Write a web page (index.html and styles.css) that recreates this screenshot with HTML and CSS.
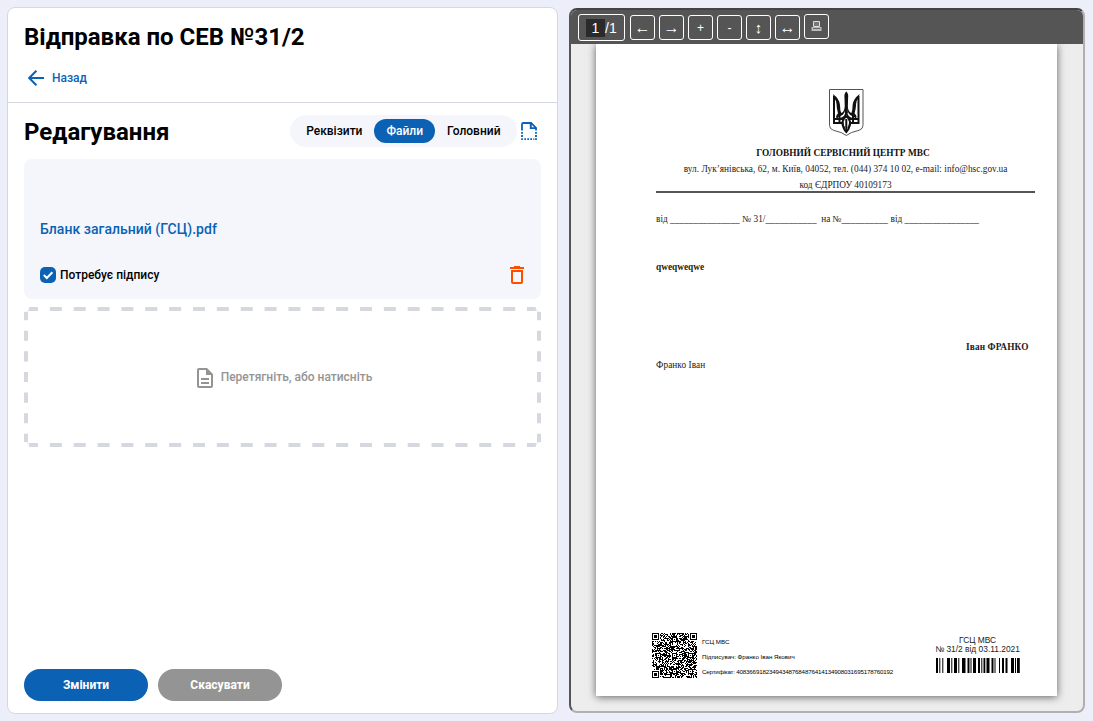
FILE: index.html
```html
<!DOCTYPE html>
<html lang="uk">
<head>
<meta charset="utf-8">
<title>Відправка по СЕВ №31/2</title>
<link rel="stylesheet" href="styles.css">
</head>
<body>
<main class="layout">
  <section class="panel">
    <header class="panel-head">
      <h1 class="title">Відправка по СЕВ №31/2</h1>
      <a class="back">
        <svg class="back-icon" width="16" height="16" viewBox="0 0 16 16"><path d="M16 8H1.6M8.4 .8L1.2 8l7.200 7.200" fill="none" stroke="#0b62b4" stroke-width="2"/></svg>
        <span>Назад</span>
      </a>
    </header>
    <div class="section-head">
      <h2 class="title title-section">Редагування</h2>
      <nav class="tabs">
        <span class="tab">Реквізити</span>
        <span class="tab tab-active">Файли</span>
        <span class="tab">Головний</span>
      </nav>
      <svg class="page-icon" width="16" height="19" viewBox="0 0 16 19">
        <path d="M1 8.500V2.200Q1 1 2.200 1H10L15 6V8.500M9.700 1V6.200H15" fill="none" stroke="#0b62b4" stroke-width="1.800"/>
        <path d="M10 1L15 6H10z" fill="#fff" stroke="#0b62b4" stroke-width="1.500"/>
        <path d="M1 10v8M15 10v8" stroke="#0b62b4" stroke-width="1.800" stroke-dasharray="1.800 1.300"/>
        <path d="M3.300 17.200h10" stroke="#0b62b4" stroke-width="1.800" stroke-dasharray="1.700 1.300"/>
      </svg>
    </div>
    <div class="file-card">
      <a class="file-name">Бланк загальний (ГСЦ).pdf</a>
      <div class="file-row">
        <span class="check"><svg width="16" height="16" viewBox="0 0 16 16"><path d="M3.800 8l3 3 5.600-5.800" fill="none" stroke="#fff" stroke-width="2"/></svg></span>
        <span class="check-label">Потребує підпису</span>
        <svg class="trash" width="14" height="18" viewBox="0 0 14 18"><path d="M0 1h4V0h6v1h4v2H0zM1 4h12v12q0 2-2 2H3q-2 0-2-2zM3 6v10h8V6z" fill="#ff4d00" fill-rule="evenodd"/></svg>
      </div>
    </div>
    <div class="drop">
      <svg class="drop-frame" width="517" height="140" viewBox="0 0 517 140">
        <g fill="none" stroke="#d6d8e0" stroke-width="4">
          <path d="M2 2H515M2 138H515" stroke-dasharray="12 11.857"/>
          <path d="M2 3V137M515 3V137" stroke-dasharray="10.200 10.430"/>
        </g>
        <path d="M0 0h5.500L4 4.500 0 5zM517 0h-5.500l1.500 4.500 4 .5zM0 140h5.500L4 135.500 0 135zM517 140h-5.500l1.500-4.500 4-.5z" fill="#fff"/>
      </svg>
      <svg class="doc-icon" width="16" height="20" viewBox="0 0 16 20"><path d="M2 0h8l6 6v12q0 2-2 2H2q-2 0-2-2V2Q0 0 2 0zM2 2v16h12V7H9V2zM4 10h8v2H4zM4 14h8v2H4z" fill="#949494" fill-rule="evenodd"/></svg>
      <span>Перетягніть, або натисніть</span>
    </div>
    <footer class="actions">
      <button class="btn btn-primary">Змінити</button>
      <button class="btn btn-muted">Скасувати</button>
    </footer>
  </section>

  <section class="viewer">
    <div class="toolbar">
      <div class="pager"><span class="pager-input">1</span>/1</div>
      <div class="tool tool-arrow">←</div>
      <div class="tool tool-arrow">→</div>
      <div class="tool">+</div>
      <div class="tool">-</div>
      <div class="tool tool-arrow tool-vertical">↕</div>
      <div class="tool tool-arrow">↔</div>
      <div class="tool tool-print">
        <svg width="11" height="11" viewBox="0 0 11 11"><path d="M2.500 .5h6v5h-6z" fill="#777" stroke="#ddd"/><path d="M.5 6h10v4H.5z" fill="#bbb"/><path d="M2 7.500h7" stroke="#666"/></svg>
      </div>
    </div>
    <article class="sheet">
      <svg class="emblem" width="37" height="49" viewBox="0 0 37 49">
        <path d="M1.500 1.500h33.500v36q0 3.500-4 4.800-9 2-12.700 5.200-3.800-3.200-12.800-5.200-4-1.300-4-4.800z" fill="#fff" stroke="#555" stroke-width="1"/>
        <g fill="none" stroke="#111" stroke-width="2" stroke-linejoin="miter">
          <path d="M6 8v27h8.500Q15.200 41 18.300 44 21.400 41 22 35h8.500V8"/>
          <path d="M6 31h6.500q5.800-1.500 5.800-8 0 6.500 5.800 8h6.400M18.300 28q-6.500 5.500-2 12M18.300 28q6.500 5.500 2 12M18.300 31v12M11.500 26v9M25 26v9"/>
        </g>
        <path d="M5 6q6.500 5 7 11 0 5 1.200 8 3-1 3.900-7l.5 1q-.6 8-5.100 9-3 1-3.500 3l-1-2q.3-2.500 2-3.500Q8.500 20 8.500 16 8 12 6 10zM31.600 6q-6.500 5-7 11 0 5-1.200 8-3-1-3.900-7l-.5 1q.6 8 5.100 9 3 1 3.500 3l1-2q-.3-2.500-2-3.500 1.500-5.500 1.500-9.500.5-4 2.500-6z" fill="#111"/>
        <path d="M18.300 3.500q2.500 2 1.800 6.500l-.4 15h-2.800l-.4-15q-.7-4.500 1.800-6.500z" fill="#111"/>
      </svg>
      <div class="org">ГОЛОВНИЙ СЕРВІСНИЙ ЦЕНТР МВС</div>
      <div class="addr">вул. Лук’янівська, 62, м. Київ, 04052, тел. (044) 374 10 02, e-mail: info@hsc.gov.ua</div>
      <div class="code">код ЄДРПОУ 40109173</div>
      <div class="refs"><span>від _______________</span><span>№ 31/___________</span><span>на №__________</span><span>від ________________</span></div>
      <div class="subject">qweqweqwe</div>
      <div class="signer">Іван ФРАНКО</div>
      <div class="author">Франко Іван</div>
      <div class="stamp">
        <svg class="qr" id="qr" width="45" height="45" viewBox="0 0 45 45"></svg>
        <div class="sign-info"><span>ГСЦ МВС</span><span>Підписувач: Франко Іван Якович</span><span class="cert">Сертифікат: 408366918234943487684876414134908031695178760192</span></div>
        <div class="reg">
          <span>ГСЦ МВС</span><span>№ 31/2 від 03.11.2021</span>
          <svg class="barcode" width="84" height="15" viewBox="0 0 84 15"><path d="M0 0h2v15H0zM3.300 0h1v15h-1zM6.300 0h1v15h-1zM11 0h3v15h-3zM15.300 0h1v15h-1zM18 0h3v15h-3zM22.300 0h1v15h-1zM26 0h3.500v15H26zM31.500 0h2v15h-2zM34.500 0h1v15h-1zM37 0h3v15h-3zM42 0h2v15h-2zM45.300 0h1v15h-1zM47.500 0h1.800v15h-1.800zM50.500 0h3v15h-3zM55.500 0h2v15h-2zM58.500 0h1v15h-1zM63 0h1v15h-1zM66 0h2v15h-2zM69.500 0h2v15h-2zM75 0h3v15h-3zM79 0h1v15h-1zM81 0h2.800v15H81z"/></svg>
        </div>
      </div>
    </article>
  </section>
</main>
<script src="qr.js"></script>
</body>
</html>
```
FILE: styles.css
```css
* { box-sizing: border-box; }
body { margin: 0; height: 721px; overflow: hidden; background: #eceff9; color: #000; font-family: Roboto, "Liberation Sans", sans-serif; font-weight: 500; font-size: 12px; }
.layout { display: flex; align-items: flex-start; gap: 11px; padding: 7px; }
.panel { flex: none; display: flex; flex-direction: column; width: 551px; height: 707px; background: #fff; border: 1px solid #d6d8e0; border-radius: 8px; }
.panel-head { height: 95px; padding: 15px 16px 0; border-bottom: 1px solid #d6d8e0; }
.title { margin: 0; font-size: 24px; line-height: 28px; font-weight: 700; }
.title-section { padding-top: 2px; }
.back { display: flex; align-items: center; gap: 8px; height: 16px; margin: 19px 0 0 4px; color: #0b62b4; }
.section-head { display: flex; align-items: center; height: 32px; margin: 12px 16px 0; }
.tabs { display: flex; align-items: center; height: 32px; margin-left: auto; padding: 0 4px; border-radius: 16px; background: #f5f6fc; }
.tab { height: 24px; padding: 0 12px; line-height: 24px; border-radius: 12px; }
.tab:last-child { padding-right: 12.500px; }
.tab-active { background: #0b62b4; color: #fff; }
.page-icon { margin: 0 4px 0 4px; }
.file-card { height: 140px; margin: 12px 16px 0; padding: 60px 16px 0; border-radius: 8px; background: #f5f6fc; }
.file-name { display: block; height: 20px; line-height: 20px; font-size: 14px; letter-spacing: .03px; color: #0b62b4; }
.file-row { display: flex; align-items: center; height: 20px; margin-top: 26px; }
.check { width: 16px; height: 16px; margin-right: 4px; border-radius: 5px; background: #0b62b4; }
.check svg { display: block; }
.trash { margin: 0 1px 0 auto; }
.drop { position: relative; display: flex; align-items: center; justify-content: center; gap: 8px; height: 140px; margin: 8px 16px 0; padding-left: 4px; color: #949494; }
.drop-frame { position: absolute; inset: 0; }
.doc-icon { margin-top: 2px; }
.actions { display: flex; gap: 10px; margin: auto 16px 12px; }
.btn { width: 124px; height: 32px; border: 0; border-radius: 16px; color: #fff; font: 700 12px Roboto, "Liberation Sans", sans-serif; }
.btn-primary { background: #0b62b4; }
.btn-muted { background: #949494; }
.viewer { flex: none; width: 516px; height: 705px; margin-top: 1px; overflow: hidden; border: 2px solid; border-color: #444 #b0b0b0 #b0b0b0 #555; border-radius: 8px; background: #ededed; }
.toolbar { display: flex; gap: 4px; height: 34px; padding: 5px 7px; background: #555; color: #fff; font-family: "Liberation Sans", sans-serif; font-weight: 400; position: relative; }
.pager { display: flex; align-items: center; width: 47px; height: 27px; margin: -1px 1px 0 0; padding-left: 7px; border: 1px solid #fff; border-radius: 3px; font-size: 14px; }
.pager-input { width: 19px; height: 18px; line-height: 18px; background: #2a2a2a; text-align: center; }
.tool { display: flex; align-items: center; justify-content: center; width: 25px; height: 25px; border: 1px solid #fff; border-radius: 3px; font-size: 12px; }
.tool-arrow { padding-top: 1px; font-family: "Liberation Serif", serif; font-size: 16px; line-height: 16px; }
.tool-vertical { font-size: 15px; }
.tool-print { margin-top: -1px; }
.sheet { width: 461px; height: 652px; margin-left: 25px; padding: 44px 22px 0 60px; background: #fff; box-shadow: 0 1px 8px rgba(0,0,0,.6); color: #222; font: 400 9.300px/12px "Liberation Serif", serif; white-space: nowrap; }
.emblem { display: block; margin-left: 171.500px; }
.org, .addr, .code { text-align: center; }
.org { margin: 9.500px 5px 0 0; font-weight: 700; letter-spacing: .03px; color: #111; }
.addr { margin-top: 4px; letter-spacing: .02px; }
.code { margin-top: 4px; height: 14px; border-bottom: 2px solid #555; }
.refs { display: flex; margin-top: 20px; gap: 2.600px; }
.refs span:nth-child(3) { margin-left: 2px; }
.subject { margin-top: 36px; font-weight: 700; }
.signer { margin: 68px 6.500px 0; text-align: right; font-weight: 700; letter-spacing: .12px; }
.author { margin-top: 6px; letter-spacing: .07px; }
.stamp { display: flex; margin: 262.500px 0 0 -4px; font-family: "Liberation Sans", sans-serif; }
.qr { flex: none; }
.sign-info { display: flex; flex-direction: column; gap: 3px; margin: 3px 0 0 5px; width: 192px; font-size: 6.200px; color: #000; }
.cert { letter-spacing: -.175px; }
.reg { display: flex; flex-direction: column; align-items: center; width: 84px; margin: 3px 0 0 41.500px; font-size: 8.400px; line-height: 9px; }
.barcode { flex: none; margin-top: 4px; }
```
FILE: qr.js
```js
// Draws the signature code: a seeded module grid with finder and alignment marks.
const size = 45;
const cell = 45 / size;
let seed = 4083669;
const next = () => (seed = (seed * 1103515245 + 12345) % 2147483648) / 2147483648;
const marks = [[0, 0, 7], [size - 7, 0, 7], [0, size - 7, 7], [20, 20, 5], [20, 4, 5], [4, 20, 5], [36, 20, 5], [20, 36, 5], [36, 36, 5]];
const isDark = (x, y) => {
  const random = next() < 0.53;
  for (const [mx, my, n] of marks) {
    const dx = x - mx, dy = y - my;
    if (dx >= 0 && dy >= 0 && dx < n && dy < n) {
      const ring = Math.min(dx, dy, n - 1 - dx, n - 1 - dy);
      return ring !== 1;
    }
    if (n === 7 && dx >= -1 && dy >= -1 && dx <= n && dy <= n) return false;
  }
  return random;
};
let d = '';
for (let y = 0; y < size; y++)
  for (let x = 0; x < size; x++)
    if (isDark(x, y)) d += `M${x * cell} ${y * cell}h${cell}v${cell}h-${cell}z`;
document.getElementById('qr').innerHTML = `<path d="${d}"/>`;
```
